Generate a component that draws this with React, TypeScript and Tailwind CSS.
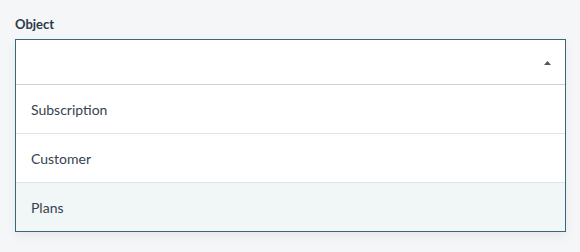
export default function App() {
  const options = ["Subscription", "Customer", "Plans"];
  return (
    <div
      className="min-h-screen w-full bg-[#f5f6f8] px-[15px] pt-[15px]"
      style={{ fontFamily: "Lato, 'Noto Sans', sans-serif" }}
    >
      <label className="block text-[13px] font-bold leading-[18px] text-[#2b3a4a]">Object</label>
      <div className="mt-[6px] w-[551px] border border-[#36687a] bg-white shadow-[0_4px_10px_rgba(0,0,0,0.06)]">
        <div className="relative h-[45px] border-b border-[#c8d0d8]">
          <svg
            className="absolute right-[14px] top-[21px]"
            width="7"
            height="4"
            viewBox="0 0 7 4"
          >
            <path d="M0 4 L3.5 0 L7 4 Z" fill="#4b5866" />
          </svg>
        </div>
        {options.map((o, i) => (
          <div
            key={o}
            className={`flex items-center px-[15px] text-[14px] text-[#36424f] ${
              i < options.length - 1 ? "h-[49px] border-b border-[#e1e4e8]" : "h-[48px] bg-[#f1f6f7]"
            }`}
          >
            {o}
          </div>
        ))}
      </div>
    </div>
  );
}
